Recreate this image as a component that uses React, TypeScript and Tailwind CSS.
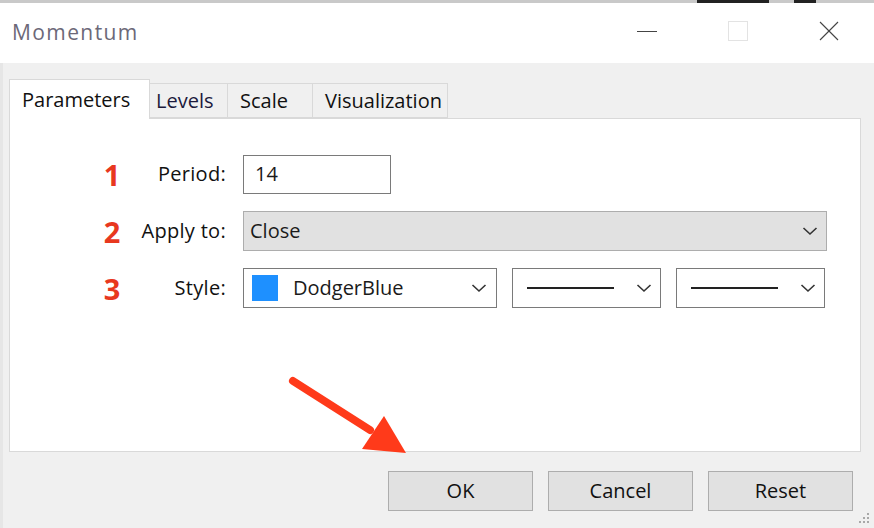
import React from "react";

const Chevron = () => (
  <svg width="16" height="10" viewBox="0 0 16 10" className="shrink-0">
    <polyline points="1.5,2 8,8 14.5,2" fill="none" stroke="#333" strokeWidth="1.6" />
  </svg>
);

export default function App() {
  const font = { fontFamily: '"Open Sans", "Noto Sans", sans-serif' };
  return (
    <div
      className="relative w-[874px] h-[528px] overflow-hidden bg-[#f0f0f0] flex flex-col text-[#1a1a1a]"
      style={font}
    >
      {/* top edge */}
      <div className="relative h-[3px] bg-[#c9c9c9] shrink-0">
        <div className="absolute left-[697px] top-0 h-[3px] w-[72px] bg-[#222]" />
        <div className="absolute left-[794px] top-0 h-[3px] w-[22px] bg-[#222]" />
      </div>
      {/* title bar */}
      <div className="h-[60px] bg-white flex items-center shrink-0 pl-[12px]">
        <div className="text-[21px] text-[#6c6878] tracking-[1.4px] flex-1">Momentum</div>
        <div className="flex items-center -mt-[4px]">
          <div className="w-[91px] flex justify-center">
            <div className="w-[20px] h-[1px] bg-[#444]" />
          </div>
          <div className="w-[91px] flex justify-center">
            <div className="w-[20px] h-[20px] border border-[#e3e3e3]" />
          </div>
          <div className="w-[91px] flex justify-center">
            <svg width="20" height="20" viewBox="0 0 20 20">
              <line x1="1" y1="1" x2="19" y2="19" stroke="#444" strokeWidth="1.1" />
              <line x1="19" y1="1" x2="1" y2="19" stroke="#444" strokeWidth="1.1" />
            </svg>
          </div>
        </div>
      </div>

      {/* body */}
      <div className="flex-1 flex flex-col pl-[9px] pr-[13px] pt-[16px] border-l-[3px] border-[#e6e6e6]">
        {/* tabs */}
        <div className="flex items-end h-[39px] relative z-10 -ml-[3px]">
          <div className="w-[141px] h-[40px] bg-white border border-[#d9d9d9] border-b-0 flex items-center pl-[12px] text-[20px] text-[#111] -mb-[1px]">
            Parameters
          </div>
          <div className="w-[78px] h-[35px] bg-[#f0f0f0] border border-[#d9d9d9] border-l-0 flex items-center pl-[6px] text-[20px] text-[#1c1a3c]">
            Levels
          </div>
          <div className="w-[85px] h-[35px] bg-[#f0f0f0] border border-[#d9d9d9] border-l-0 flex items-center pl-[12px] text-[20px] text-[#111]">
            Scale
          </div>
          <div className="w-[135px] h-[35px] bg-[#f0f0f0] border border-[#d9d9d9] border-l-0 flex items-center pl-[12px] text-[20px] text-[#111]">
            Visualization
          </div>
        </div>
        {/* panel */}
        <div className="h-[334px] w-[852px] -ml-[3px] bg-white border border-[#d9d9d9] pl-[84px] pt-[35px] flex flex-col gap-[17px]">
          <Row num="1" label="Period:">
            <div className="w-[148px] h-[39px] border border-[#7a7a7a] bg-white flex items-center pl-[11px] text-[20px]">
              14
            </div>
          </Row>
          <Row num="2" label="Apply to:">
            <div className="w-[584px] h-[40px] border border-[#adadad] bg-[#e1e1e1] flex items-center pl-[6px] pr-[8px] text-[20px]">
              <span className="flex-1">Close</span>
              <Chevron />
            </div>
          </Row>
          <Row num="3" label="Style:">
            <div className="flex gap-[15px]">
              <div className="w-[254px] h-[40px] border border-[#7a7a7a] bg-white flex items-center pl-[8px] pr-[9px] text-[20px]">
                <div className="w-[26px] h-[26px] bg-[#1e90ff]" />
                <span className="flex-1 pl-[15px]">DodgerBlue</span>
                <Chevron />
              </div>
              {[0, 1].map((i) => (
                <div
                  key={i}
                  className="w-[149px] h-[40px] border border-[#7a7a7a] bg-white flex items-center pl-[14px] pr-[8px]"
                >
                  <div className="w-[87px] h-[2px] bg-[#222]" />
                  <div className="flex-1" />
                  <Chevron />
                </div>
              ))}
            </div>
          </Row>
        </div>
        {/* buttons */}
        <div className="flex justify-end gap-[15px] mt-[19px] pr-[8px]">
          {["OK", "Cancel", "Reset"].map((t) => (
            <div
              key={t}
              className="w-[145px] h-[40px] border border-[#adadad] bg-[#e1e1e1] flex items-center justify-center text-[20px] text-[#111]"
            >
              {t}
            </div>
          ))}
        </div>
      </div>

      {/* resize grip */}
      <svg className="absolute right-[4px] bottom-[3px]" width="14" height="14" viewBox="0 0 14 14">
        {[
          [11, 2],
          [7, 6],
          [11, 6],
          [3, 10],
          [7, 10],
          [11, 10],
        ].map(([x, y], i) => (
          <rect key={i} x={x} y={y} width="2" height="2" fill="#a8a8a8" />
        ))}
      </svg>

      {/* red arrow annotation */}
      <svg className="absolute left-0 top-0 pointer-events-none" width="874" height="528" viewBox="0 0 874 528">
        <line x1="293" y1="381" x2="370" y2="430" stroke="#ff3a1a" strokeWidth="8" strokeLinecap="round" />
        <polygon points="384,416 406,453 362,449" fill="#ff3a1a" />
      </svg>
    </div>
  );
}

function Row({ num, label, children }: { num: string; label: string; children: React.ReactNode }) {
  return (
    <div className="flex items-center h-[40px]">
      <div className="w-[36px] text-center text-[29px] font-bold text-[#e8381f] leading-none" style={{ fontFamily: '"Open Sans", "Noto Sans", sans-serif' }}>
        {num}
      </div>
      <div className="w-[96px] text-right text-[20px] text-[#111] tracking-[0.3px]">{label}</div>
      <div className="w-[17px]" />
      {children}
    </div>
  );
}
